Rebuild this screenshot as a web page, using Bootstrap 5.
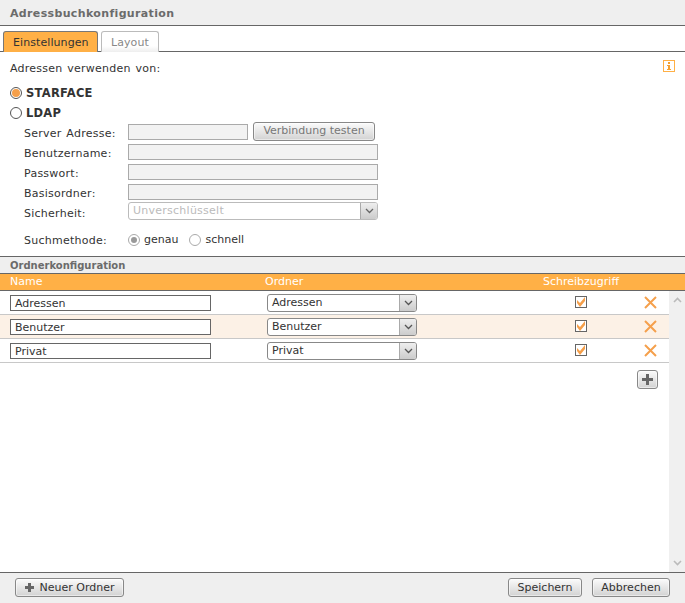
<!DOCTYPE html>
<html lang="de">
<head>
<meta charset="utf-8">
<title>Adressbuchkonfiguration</title>
<link href="https://cdn.jsdelivr.net/npm/bootstrap@5.3.0/dist/css/bootstrap.min.css" rel="stylesheet">
<style>
html,body{height:603px;overflow:hidden}
body{font-family:"DejaVu Sans",Verdana,sans-serif;font-size:11px;line-height:14px;color:#333;background:#fff}
.shell{height:603px;width:685px}
.title-bar{height:26px;background:#efefef;border-bottom:1px solid #666;padding:7px 10px 0;font-weight:700;color:#6b6b6b;letter-spacing:.35px}
.tab-strip{height:26px;border-bottom:1px solid #666;padding:5px 0 0 3px;gap:3px}
.tab-item{height:21px;border:1px solid #bbb;border-bottom:0;border-radius:3px 3px 0 0;padding:4px 9px 0;color:#888;background:linear-gradient(#fff 70%,#eee);letter-spacing:.08px}
.tab-on{background:#ffb046;border-color:#777;color:#333;width:95px}
.tab-off{width:58px}
.top-form{height:204px;padding:10px 10px 0;letter-spacing:.25px;word-spacing:1px}
.info-mark{position:absolute;right:10px;top:8px}
.radio-big{width:12px;height:12px;border:1px solid #555;border-radius:50%;background:#fff;flex:none;margin-right:4px;display:flex;align-items:center;justify-content:center}
.radio-big.on::after{content:"";width:8px;height:8px;border-radius:50%;background:#f59f4a}
.radio-small{width:12px;height:12px;border:1px solid #aaa;border-radius:50%;background:#fff;flex:none;display:flex;align-items:center;justify-content:center}
.radio-small.on::after{content:"";width:6px;height:6px;border-radius:50%;background:#999}
.src-row{height:20px;font-weight:700;font-size:11.5px;color:#333}
.first-src{margin-top:7px}
.fld-row{height:20px;padding-left:14px}
.fld-label{width:104px;flex:none;padding-top:2px}
.fld-box{height:16px;border:1px solid #aaa;background:#f2f2f2;flex:none;margin-top:-2px}
.w-short{width:120px}
.w-long{width:250px}
.tb-btn{border:1px solid #888;border-radius:3px;background:linear-gradient(#fbfbfb,#d2d2d2);color:#333;font-size:11px;line-height:14px;padding:0;height:19px;box-shadow:inset 0 0 0 1px rgba(255,255,255,.5);letter-spacing:normal;word-spacing:normal}
.test-btn{width:122px;margin-left:5px;color:#777;margin-top:-4px}
.sel-box{height:18px;border:1px solid #888;border-radius:3px;background:#fff;overflow:hidden;flex:none}
.sel-box.off{border-color:#bbb;color:#bbb;background:#fff;padding-left:0;margin-top:-4px}
.sel-text{padding-left:4px;flex:1;color:inherit;line-height:16px}
.sel-arrow{width:17px;border-left:1px solid #aaa;background:linear-gradient(#eee,#ccc);display:flex;align-items:center;justify-content:center}
.search-row{height:20px;padding-left:14px;margin-top:7px}
.opt-text{letter-spacing:normal}
.opt-gap{margin-left:11px}
.sec-head{border-top:1px solid #666;border-bottom:1px solid #666;background:#efefef;font-weight:700;color:#6b6b6b;font-size:10px;padding:2px 10px 0;box-sizing:content-box;height:14px}
.col-head{height:17px;background:#ffb046;border-bottom:1px solid #666;color:#fff;padding-top:1px}
.c-name{width:265px;flex:none;padding-left:10px}
.c-dir{width:278px;flex:none}
.c-write{width:137px;flex:none}
.list-area{height:281px}
.rows-wrap{width:669px}
.item-row{height:24px;border-bottom:1px solid #c8c8c8}
.item-row.alt{background:#fcf1e6}
.name-box{width:201px;height:16px;border:1px solid #666;background:#fff;padding:1px 4px;line-height:14px}
.dir-sel{width:150px;margin-left:2px}
.dir-sel .sel-text{color:#333}
.dir-col{width:255px;flex:none}
.chk-col{width:124px;flex:none;padding-left:55px;margin-top:-2px}
.chk-mark{width:12px;height:12px;border:1px solid #666;background:#fff;display:flex;align-items:center;justify-content:center}
.del-col{width:25px;flex:none;display:flex}
.add-row{padding:7px 11px 0 0}
.add-btn{width:21px;height:19px;display:flex;align-items:center;justify-content:center}
.scroll-track{width:16px;background:#f0f0f0;padding:6px 0}
.foot-bar{height:31px;background:#efefef;border-top:1px solid #666;padding:5px 15px 0}
.btn-new{width:109px;gap:6px}
.btn-save{width:74px}
.btn-cancel{width:78px}
.foot-right{gap:10px}
</style>
</head>
<body>
<div class="shell d-flex flex-column position-relative">
  <div class="title-bar">Adressbuchkonfiguration</div>
  <div class="tab-strip d-flex">
    <div class="tab-item tab-on">Einstellungen</div>
    <div class="tab-item tab-off">Layout</div>
  </div>
  <div class="top-form position-relative">
    <svg class="info-mark" width="12" height="12" viewBox="0 0 12 12"><rect x=".5" y=".5" width="11" height="11" fill="#fff" stroke="#ffb046"/><path d="M5 2h2v2H5zM4 5h3v4h1v1H4V9h1V6H4z" fill="#f5a030"/></svg>
    <div>Adressen verwenden von:</div>
    <div class="src-row d-flex align-items-center first-src"><span class="radio-big on"></span>STARFACE</div>
    <div class="src-row d-flex align-items-center"><span class="radio-big"></span>LDAP</div>
    <div class="fld-row d-flex align-items-center"><span class="fld-label">Server Adresse:</span><span class="fld-box w-short"></span><button class="tb-btn test-btn" type="button">Verbindung testen</button></div>
    <div class="fld-row d-flex align-items-center"><span class="fld-label">Benutzername:</span><span class="fld-box w-long"></span></div>
    <div class="fld-row d-flex align-items-center"><span class="fld-label">Passwort:</span><span class="fld-box w-long"></span></div>
    <div class="fld-row d-flex align-items-center"><span class="fld-label">Basisordner:</span><span class="fld-box w-long"></span></div>
    <div class="fld-row d-flex align-items-center"><span class="fld-label">Sicherheit:</span>
      <div class="sel-box off w-long d-flex"><span class="sel-text">Unverschlüsselt</span><span class="sel-arrow"><svg width="9" height="6" viewBox="0 0 9 6"><path d="M1 1l3.500 3.500L8 1" fill="none" stroke="#666" stroke-width="1.300"/></svg></span></div>
    </div>
    <div class="search-row d-flex align-items-center"><span class="fld-label">Suchmethode:</span><span class="radio-small on me-1"></span><span class="opt-text">genau</span><span class="radio-small opt-gap me-1"></span><span class="opt-text">schnell</span></div>
  </div>
  <div class="sec-head">Ordnerkonfiguration</div>
  <div class="col-head d-flex"><span class="c-name">Name</span><span class="c-dir">Ordner</span><span class="c-write text-nowrap">Schreibzugriff</span></div>
  <div class="list-area d-flex">
    <div class="rows-wrap">
      <div class="item-row d-flex align-items-center"><div class="c-name"><div class="name-box">Adressen</div></div>
        <div class="dir-col"><div class="sel-box dir-sel d-flex"><span class="sel-text">Adressen</span><span class="sel-arrow"><svg width="9" height="6" viewBox="0 0 9 6"><path d="M1 1l3.500 3.500L8 1" fill="none" stroke="#555" stroke-width="1.300"/></svg></span></div></div>
        <div class="chk-col"><span class="chk-mark"><svg width="10" height="10" viewBox="0 0 10 10"><path d="M1 3l3 3 5-6v4L4 10 1 6z" fill="#f59f4a"/></svg></span></div>
        <div class="del-col"><svg width="13" height="13" viewBox="0 0 13 13"><path d="M1 1l11 11M12 1L1 12" stroke="#f5a04c" stroke-width="2" fill="none"/></svg></div>
      </div>
      <div class="item-row alt d-flex align-items-center"><div class="c-name"><div class="name-box">Benutzer</div></div>
        <div class="dir-col"><div class="sel-box dir-sel d-flex"><span class="sel-text">Benutzer</span><span class="sel-arrow"><svg width="9" height="6" viewBox="0 0 9 6"><path d="M1 1l3.500 3.500L8 1" fill="none" stroke="#555" stroke-width="1.300"/></svg></span></div></div>
        <div class="chk-col"><span class="chk-mark"><svg width="10" height="10" viewBox="0 0 10 10"><path d="M1 3l3 3 5-6v4L4 10 1 6z" fill="#f59f4a"/></svg></span></div>
        <div class="del-col"><svg width="13" height="13" viewBox="0 0 13 13"><path d="M1 1l11 11M12 1L1 12" stroke="#f5a04c" stroke-width="2" fill="none"/></svg></div>
      </div>
      <div class="item-row d-flex align-items-center"><div class="c-name"><div class="name-box">Privat</div></div>
        <div class="dir-col"><div class="sel-box dir-sel d-flex"><span class="sel-text">Privat</span><span class="sel-arrow"><svg width="9" height="6" viewBox="0 0 9 6"><path d="M1 1l3.500 3.500L8 1" fill="none" stroke="#555" stroke-width="1.300"/></svg></span></div></div>
        <div class="chk-col"><span class="chk-mark"><svg width="10" height="10" viewBox="0 0 10 10"><path d="M1 3l3 3 5-6v4L4 10 1 6z" fill="#f59f4a"/></svg></span></div>
        <div class="del-col"><svg width="13" height="13" viewBox="0 0 13 13"><path d="M1 1l11 11M12 1L1 12" stroke="#f5a04c" stroke-width="2" fill="none"/></svg></div>
      </div>
      <div class="add-row d-flex justify-content-end"><button class="tb-btn add-btn" type="button" aria-label="Hinzufügen"><svg width="11" height="11" viewBox="0 0 11 11"><path d="M4 0h3v4h4v3H7v4H4V7H0V4h4z" fill="#666"/></svg></button></div>
    </div>
    <div class="scroll-track d-flex flex-column justify-content-between align-items-center">
      <svg width="9" height="6" viewBox="0 0 9 6"><path d="M1 5l3.500-3.500L8 5" fill="none" stroke="#bbb" stroke-width="1.600"/></svg>
      <svg width="9" height="6" viewBox="0 0 9 6"><path d="M1 1l3.500 3.500L8 1" fill="none" stroke="#bbb" stroke-width="1.600"/></svg>
    </div>
  </div>
  <div class="foot-bar d-flex justify-content-between">
    <button class="tb-btn btn-new d-flex align-items-center justify-content-center" type="button"><svg width="9" height="9" viewBox="0 0 9 9"><path d="M3 0h3v3h3v3H6v3H3V6H0V3h3z" fill="#666"/></svg>Neuer Ordner</button>
    <div class="d-flex foot-right"><button class="tb-btn btn-save" type="button">Speichern</button><button class="tb-btn btn-cancel" type="button">Abbrechen</button></div>
  </div>
</div>
<script src="https://cdn.jsdelivr.net/npm/bootstrap@5.3.0/dist/js/bootstrap.bundle.min.js"></script>
</body>
</html>
